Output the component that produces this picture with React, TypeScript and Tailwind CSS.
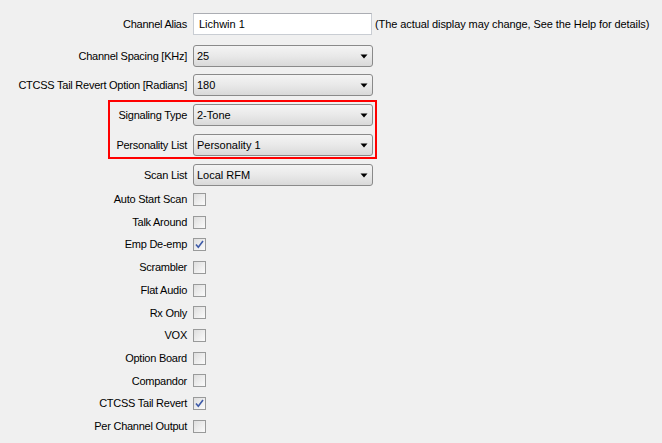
import React from 'react';

const FONT = { fontFamily: '"Liberation Sans", Arial, sans-serif' };

function Label({ text, width }: { text: string; width: number }) {
  return (
    <div
      className="shrink-0 text-right text-[11px] tracking-[-0.25px] text-black whitespace-nowrap pr-[6px]"
      style={{ width }}
    >
      {text}
    </div>
  );
}

function Select({ value }: { value: string }) {
  return (
    <div className="flex h-[22px] w-[180px] items-center justify-between rounded-[3px] border border-[#8a8a8a] bg-gradient-to-b from-[#f4f4f4] via-[#e9e9e9] to-[#d9d9d9] pl-[3px] pr-[4px] text-[11px] text-black">
      <span>{value}</span>
      <svg width="8" height="5" viewBox="0 0 8 5">
        <path d="M0.5 0.5 H7.5 L4 4.5 Z" fill="#000" />
      </svg>
    </div>
  );
}

function SelectRow({ label, value, labelWidth = 193 }: { label: string; value: string; labelWidth?: number }) {
  return (
    <div className="flex items-center">
      <Label text={label} width={labelWidth} />
      <Select value={value} />
    </div>
  );
}

function Checkbox({ checked }: { checked?: boolean }) {
  return (
    <div className="flex h-[13px] w-[13px] items-center justify-center border border-[#999a9a] bg-gradient-to-br from-[#dedede] to-[#fbfbfb]">
      {checked && (
        <svg width="11" height="11" viewBox="0 0 11 11">
          <path d="M2 5.5 L4.3 8.3 L9 2" fill="none" stroke="#3d5aa8" strokeWidth="1.6" />
        </svg>
      )}
    </div>
  );
}

const checks: [string, boolean][] = [
  ['Auto Start Scan', false],
  ['Talk Around', false],
  ['Emp De-emp', true],
  ['Scrambler', false],
  ['Flat Audio', false],
  ['Rx Only', false],
  ['VOX', false],
  ['Option Board', false],
  ['Compandor', false],
  ['CTCSS Tail Revert', true],
  ['Per Channel Output', false],
];

export default function App() {
  return (
    <div className="h-[443px] w-[662px] overflow-hidden bg-[#f0f0f0] pt-[13px]" style={FONT}>
      <div className="flex h-[22px] items-center">
        <Label text="Channel Alias" width={193} />
        <div className="flex h-[22px] w-[179px] items-center border border-[#c9cdd3] border-t-[#abadb3] bg-white pl-[5px] text-[11px] text-black">
          Lichwin 1
        </div>
        <span className="ml-[3px] text-[11px] tracking-[-0.09px] text-black whitespace-nowrap">
          (The actual display may change, See the Help for details)
        </span>
      </div>

      <div className="mt-[10px]">
        <SelectRow label="Channel Spacing [KHz]" value="25" />
      </div>
      <div className="mt-[7px]">
        <SelectRow label="CTCSS Tail Revert Option [Radians]" value="180" />
      </div>

      <div className="mt-[4px] ml-[108px] flex w-[269px] flex-col gap-[8px] border-2 border-[#ff0000] pt-[2px] pb-[1px]">
        <SelectRow label="Signaling Type" value="2-Tone" labelWidth={83} />
        <SelectRow label="Personality List" value="Personality 1" labelWidth={83} />
      </div>

      <div className="mt-[5px]">
        <SelectRow label="Scan List" value="Local RFM" />
      </div>

      <div className="mt-[2px] flex flex-col">
        {checks.map(([label, checked]) => (
          <div key={label} className="flex h-[22.7px] items-center">
            <Label text={label} width={193} />
            <Checkbox checked={checked} />
          </div>
        ))}
      </div>
    </div>
  );
}
